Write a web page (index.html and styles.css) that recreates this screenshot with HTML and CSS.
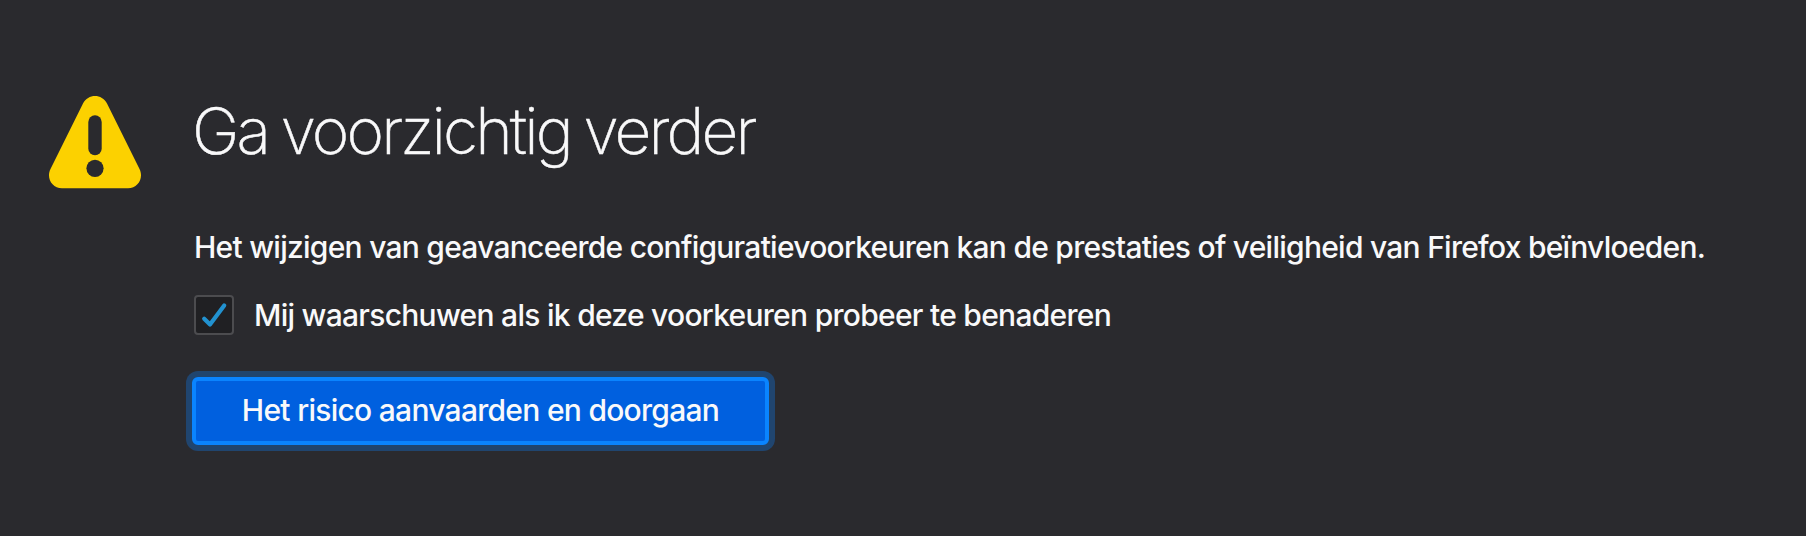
FILE: index.html
```html
<!DOCTYPE html>
<html lang="nl">
<head>
<meta charset="utf-8">
<title>Geavanceerde voorkeuren</title>
<link rel="stylesheet" href="styles.css">
</head>
<body>
<main class="warning">
  <svg class="warning-icon" viewBox="0 0 94 94" aria-hidden="true">
    <path fill="#fcd100" d="M35 8.500C40-1.500 54-1.500 59 8.500L91.500 74C96 83 90 93.300 80 93.300H14C4 93.300-2 83 2.500 74Z"/>
    <path d="M47 27V53.500" stroke="#2a2a2e" stroke-width="13.400" stroke-linecap="round"/>
    <circle cx="47" cy="73.300" r="8.600" fill="#2a2a2e"/>
  </svg>
  <div class="content">
    <h1 class="title">Ga voorzichtig verder</h1>
    <p class="description">Het wijzigen van geavanceerde configuratievoorkeuren kan de prestaties of veiligheid van Firefox beïnvloeden.</p>
    <div class="option">
      <span class="checkbox" role="checkbox" aria-checked="true"><svg class="check" viewBox="0 0 36 36"><path d="M8.200 21.800L14 27.500L28.200 8.500" fill="none" stroke="#2292d0" stroke-width="4.200" stroke-linecap="round" stroke-linejoin="round"/></svg></span>
      <span class="label">Mij waarschuwen als ik deze voorkeuren probeer te benaderen</span>
    </div>
    <button class="accept">Het risico aanvaarden en doorgaan</button>
  </div>
</main>
</body>
</html>
```
FILE: styles.css
```css
* { box-sizing: border-box; }
body { margin: 0; background: #2a2a2e; color: #f9f9fa; font-family: Inter, sans-serif; }
.warning { display: flex; gap: 52px; height: 536px; padding: 95px 0 0 48px; }
.warning-icon { width: 94px; height: 94px; flex: none; }
.content { display: flex; flex-direction: column; align-items: flex-start; white-space: nowrap; }
.title { margin: 0 0 0 -2px; height: 129px; line-height: 71px; font-size: 64px; font-weight: 200; letter-spacing: -2.85px; word-spacing: -2.5px; -webkit-text-stroke: 0.5px #f9f9fa; }
.description { margin: 0; height: 46px; line-height: 46px; font-size: 30px; font-weight: 500; letter-spacing: -0.74px; }
.option { display: flex; align-items: center; gap: 20px; margin-top: 25px; height: 40px; }
.checkbox { width: 40px; height: 40px; border: 2px solid #4c4c4f; border-radius: 4px; background: #202023; }
.check { display: block; width: 36px; height: 36px; }
.label { font-size: 30px; font-weight: 500; letter-spacing: -0.72px; }
.accept { margin: 42px 0 0 -2px; width: 577px; height: 68px; padding: 0 0 2px; border: 4px solid #0a84ff; border-radius: 6px; background: #0060df; box-shadow: 0 0 0 6px #20456f; color: #f9f9fa; font: 500 30px Inter, sans-serif; letter-spacing: -0.72px; }
```
